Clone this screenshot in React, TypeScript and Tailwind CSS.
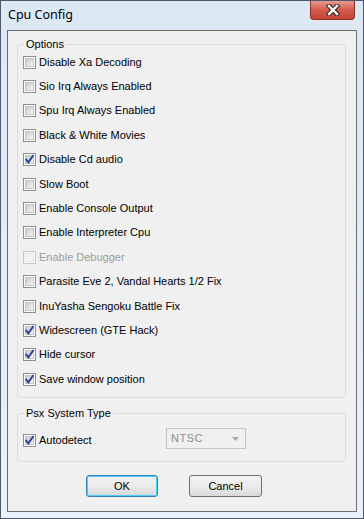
import React from "react";

const font = { fontFamily: '"Liberation Sans", Arial, sans-serif' };

function CheckBox({ checked, disabled }: { checked?: boolean; disabled?: boolean }) {
  return (
    <span
      className={`shrink-0 w-[13px] h-[13px] border flex items-center justify-center ${
        disabled ? "border-[#c9c9c9] bg-[#f7f7f7]" : "border-[#8e8f8f] bg-white"
      }`}
    >
      <span
        className={`relative w-[9px] h-[9px] ${
          disabled
            ? "bg-[#f4f4f4] border border-[#e6e6e6]"
            : "bg-gradient-to-br from-[#c9ccd1] to-[#f6f6f6] border border-[#c2c4c8]"
        }`}
      >
        {checked && (
          <svg
            viewBox="0 0 11 11"
            className="absolute -left-[2px] -top-[2px] w-[11px] h-[11px]"
            aria-hidden="true"
          >
            <path
              d="M2.2 5.6 L4.4 8.4 L8.9 1.8"
              fill="none"
              stroke="#2a3f9c"
              strokeWidth={1.9}
              strokeLinecap="square"
            />
          </svg>
        )}
      </span>
    </span>
  );
}

function Option({
  label,
  checked,
  disabled,
}: {
  label: string;
  checked?: boolean;
  disabled?: boolean;
}) {
  return (
    <div className="h-[24.4px] flex items-center pl-[5px]">
      <CheckBox checked={checked} disabled={disabled} />
      <span
        className={`ml-[3px] text-[11px] leading-[13px] ${
          disabled ? "text-[#9d9d9d]" : "text-black"
        }`}
      >
        {label}
      </span>
    </div>
  );
}

const options: { label: string; checked?: boolean; disabled?: boolean }[] = [
  { label: "Disable Xa Decoding" },
  { label: "Sio Irq Always Enabled" },
  { label: "Spu Irq Always Enabled" },
  { label: "Black & White Movies" },
  { label: "Disable Cd audio", checked: true },
  { label: "Slow Boot" },
  { label: "Enable Console Output" },
  { label: "Enable Interpreter Cpu" },
  { label: "Enable Debugger", disabled: true },
  { label: "Parasite Eve 2, Vandal Hearts 1/2 Fix" },
  { label: "InuYasha Sengoku Battle Fix" },
  { label: "Widescreen (GTE Hack)", checked: true },
  { label: "Hide cursor", checked: true },
  { label: "Save window position", checked: true },
];

function CloseGlyph() {
  return (
    <svg viewBox="0 0 14 12" className="w-[14px] h-[12px]" aria-hidden="true">
      <path d="M3 2 L11 10 M11 2 L3 10" stroke="#3b2a28" strokeWidth={4.6} strokeLinecap="square" />
      <path d="M3 2 L11 10 M11 2 L3 10" stroke="#ffffff" strokeWidth={2.4} strokeLinecap="square" />
    </svg>
  );
}

export default function App() {
  return (
    <div
      className="w-[364px] h-[519px] border border-[#4d5868] bg-gradient-to-b from-[#dde8f5] to-[#e9f1fa] flex flex-col"
      style={font}
    >
      {/* Title bar */}
      <div className="h-[29px] flex items-start justify-between">
        <span
          className="pl-[7px] pt-[6px] text-[12.5px] leading-[16px] text-black"
          style={{ fontFamily: '"Noto Sans", "Liberation Sans", sans-serif' }}
        >
          Cpu Config
        </span>
        <div className="mr-[8px] w-[45px] h-[19px] rounded-b-[4px] border border-t-0 border-[#8a3028] bg-gradient-to-b from-[#e69a8e] via-[#d25b4d] to-[#c64434] flex items-center justify-center">
          <CloseGlyph />
        </div>
      </div>

      {/* Client area */}
      <div className="flex-1 mx-[6px] mb-[6px] border border-[#6e6e6e] bg-[#f0f0f0] flex flex-col">
        <fieldset className="mt-[7px] ml-[9px] mr-[10px] border border-[#d5dfe5] rounded-[3px] pb-[6px]">
          <legend className="ml-[6px] px-[2px] text-[11px] leading-[13px] text-black">Options</legend>
          <div className="flex flex-col -mt-[1px]">
            {options.map((o) => (
              <Option key={o.label} label={o.label} checked={o.checked} disabled={o.disabled} />
            ))}
          </div>
        </fieldset>

        <fieldset className="mt-[9px] ml-[9px] mr-[10px] h-[55px] border border-[#d5dfe5] rounded-[3px]">
          <legend className="ml-[6px] px-[2px] text-[11px] leading-[13px] text-black">
            Psx System Type
          </legend>
          <div className="flex items-start">
            <div className="w-[148px] flex items-center pl-[5px] mt-[14px]">
              <CheckBox checked />
              <span className="ml-[3px] text-[11px] leading-[13px]">Autodetect</span>
            </div>
            <div className="mt-[8px] w-[80px] h-[21px] border border-[#c4c4c4] bg-[#f0f0f0] flex items-center justify-between pl-[4px] pr-[6px]">
              <span className="text-[11px] leading-[13px] text-[#8d8d8d] tracking-[0.5px]">NTSC</span>
              <svg viewBox="0 0 7 4" className="w-[7px] h-[4px]" aria-hidden="true">
                <path d="M0 0 L7 0 L3.5 4 Z" fill="#a8a8a8" />
              </svg>
            </div>
          </div>
        </fieldset>

        <div className="mt-[13px] flex justify-center gap-[31px] pr-[16px]">
          <button className="w-[72px] h-[22px] rounded-[3px] border border-[#3c7fb1] bg-gradient-to-b from-[#f2f2f2] via-[#ebebeb] to-[#d9d9d9] text-[11px] text-black shadow-[inset_0_0_0_1px_#48d0f8]">
            OK
          </button>
          <button className="w-[73px] h-[22px] rounded-[3px] border border-[#707070] bg-gradient-to-b from-[#f2f2f2] via-[#ebebeb] to-[#d9d9d9] text-[11px] text-black">
            Cancel
          </button>
        </div>
      </div>
    </div>
  );
}
